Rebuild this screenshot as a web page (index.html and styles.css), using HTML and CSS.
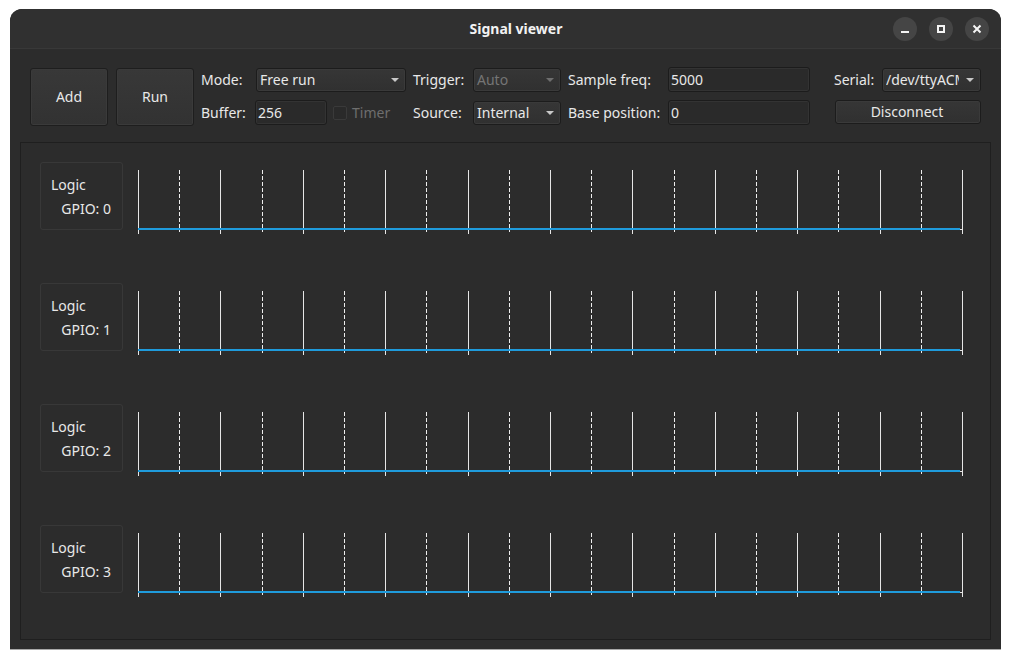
FILE: index.html

```html
<!DOCTYPE html>
<html lang="en">
<head>
  <meta charset="UTF-8" />
  <title>Signal viewer</title>
  <meta name="viewport" content="width=device-width, initial-scale=1.0" />
  <link rel="stylesheet" href="styles.css">
</head>
<body>
  <svg class="defs" width="0" height="0">
    <symbol id="scale" viewBox="0 0 830 66">
      <!-- solid ticks every 82.4px, dashed ones halfway -->
      <path class="solid" d="M.5 0V64M82.5 0V64M165.5 0V64M247.5 0V64M330.5 0V64M412.5 0V64M494.5 0V64M577.5 0V64M659.5 0V64M742.5 0V64M824.5 0V64" />
      <path class="dashed" d="M41.5 0V62M124.5 0V62M206.5 0V62M288.5 0V62M371.5 0V62M453.5 0V62M536.5 0V62M618.5 0V62M700.5 0V62M783.5 0V62" />
      <path class="base" d="M0 59.5H825" />
      <path class="signal" d="M0 59H822" />
    </symbol>
  </svg>

  <div class="window">
    <header class="titlebar">
      <h1>Signal viewer</h1>
      <div class="winbtns">
        <button class="winbtn"><svg width="10" height="10" viewBox="0 0 10 10"><path d="M1 8H9" /></svg></button>
        <button class="winbtn"><svg width="10" height="10" viewBox="0 0 10 10"><rect x="2" y="2" width="6" height="6" /></svg></button>
        <button class="winbtn"><svg width="10" height="10" viewBox="0 0 10 10"><path d="M1.5 1.5L8.5 8.5M8.5 1.5L1.5 8.5" /></svg></button>
      </div>
    </header>

    <div class="toolbar">
      <button class="bigbtn">Add</button>
      <button class="bigbtn">Run</button>
      <div class="controls">
        <label>Mode:</label>
        <div class="combo mode"><span>Free run</span><i class="arrow"></i></div>
        <label>Trigger:</label>
        <div class="combo mid off"><span>Auto</span><i class="arrow"></i></div>
        <label>Sample freq:</label>
        <input class="field wide" value="5000" />
        <label>Serial:</label>
        <div class="combo"><span class="clip">/dev/ttyACM0</span><i class="arrow"></i></div>

        <label>Buffer:</label>
        <div class="bufrow">
          <input class="field buf" value="256" />
          <span class="check"></span>
          <span class="timer">Timer</span>
        </div>
        <label>Source:</label>
        <div class="combo mid"><span>Internal</span><i class="arrow"></i></div>
        <label>Base position:</label>
        <input class="field wide" value="0" />
        <button class="disconnect">Disconnect</button>
      </div>
    </div>

    <main class="panel">
      <div class="row">
        <div class="tag"><div>Logic</div><div class="gpio">GPIO: 0</div></div>
        <svg class="plot" width="830" height="66"><use href="#scale" /></svg>
      </div>
      <div class="row">
        <div class="tag"><div>Logic</div><div class="gpio">GPIO: 1</div></div>
        <svg class="plot" width="830" height="66"><use href="#scale" /></svg>
      </div>
      <div class="row">
        <div class="tag"><div>Logic</div><div class="gpio">GPIO: 2</div></div>
        <svg class="plot" width="830" height="66"><use href="#scale" /></svg>
      </div>
      <div class="row">
        <div class="tag"><div>Logic</div><div class="gpio">GPIO: 3</div></div>
        <svg class="plot" width="830" height="66"><use href="#scale" /></svg>
      </div>
    </main>
  </div>
</body>
</html>
```

FILE: styles.css

```css
* { box-sizing: border-box; }
body { margin: 0; background: #fff; font-family: "Noto Sans", sans-serif; font-size: 14px; color: #e8e8e8; }
.defs { position: absolute; }

.window { width: 991px; height: 641px; margin: 9px 0 0 10px; background: #2c2c2c; border-radius: 12px 12px 0 0; border-bottom: 1px solid #a8a8a8; display: flex; flex-direction: column; }

.titlebar { height: 40px; flex: none; background: #303030; border-radius: 12px 12px 0 0; border-bottom: 1px solid #383838; position: relative; display: flex; justify-content: flex-end; align-items: center; padding-right: 12px; }
.titlebar h1 { position: absolute; left: 21px; right: 0; top: 10px; margin: 0; text-align: center; font-size: 14px; font-weight: 700; color: #f2f2f2; }
.winbtns { display: flex; gap: 12px; position: relative; }
.winbtn { width: 24px; height: 24px; padding: 0; border: none; border-radius: 50%; background: #454545; display: flex; align-items: center; justify-content: center; }
.winbtn svg { fill: none; stroke: #f5f5f5; stroke-width: 2; }

.toolbar { display: flex; gap: 8px; padding: 19px 20px 0; height: 93px; flex: none; }
.bigbtn { width: 78px; height: 58px; padding: 0 0 2px; background: linear-gradient(#383838, #323232); border: 1px solid #1e1e1e; border-radius: 3px; color: #e8e8e8; font: inherit; box-shadow: 0 0 0 1px #3a3a3a inset; }

.controls { display: grid; grid-template-columns: 54px 158px 60px 95px 100px 166px 48px 99px; grid-template-rows: 25px 25px; row-gap: 8px; margin: -1px 0 0 -1px; height: 58px; align-items: center; }
.controls > label { white-space: nowrap; }

.combo { height: 24px; align-self: end; background: linear-gradient(#363636, #303030); border: 1px solid #1c1c1c; border-radius: 3px; display: flex; align-items: center; justify-content: space-between; padding: 0 6px 2px 3px; box-shadow: 0 0 0 1px #3a3a3a inset; overflow: hidden; }
.combo.mode { margin: 0 7px 0 1px; }
.combo.mid { margin-right: 7px; }
.combo.off { color: #757575; }
.clip { width: 73px; overflow: hidden; white-space: nowrap; }
.arrow { width: 0; height: 0; flex: none; margin-top: 2px; border-left: 4px solid transparent; border-right: 4px solid transparent; border-top: 4px solid #c8c8c8; }
.combo.off .arrow { border-top-color: #6e6e6e; }

.field { width: 100%; height: 25px; background: #2a2a2a; border: 1px solid #1c1c1c; border-radius: 3px; color: #e8e8e8; font: inherit; padding: 0 2px; box-shadow: 0 0 0 1px #333 inset; outline: none; }
.field.wide { width: 142px; }
.bufrow { display: flex; align-items: center; }
.field.buf { width: 72px; }
.check { width: 14px; height: 14px; margin-left: 6px; border: 1px solid #3a3a3a; border-radius: 2px; background: #2a2a2a; }
.timer { margin-left: 5px; color: #6e6e6e; }

.disconnect { grid-column: span 2; align-self: start; height: 24px; margin-left: 1px; background: linear-gradient(#363636, #303030); border: 1px solid #1c1c1c; border-radius: 3px; color: #e8e8e8; font: inherit; padding: 0 2px 2px 0; box-shadow: 0 0 0 1px #3a3a3a inset; }

.panel { margin: 0 10px 9px; flex: 1; border: 1px solid #1f1f1f; padding: 19px 0 0 19px; display: flex; flex-direction: column; gap: 53px; }
.row { display: flex; gap: 15px; height: 68px; }
.tag { width: 83px; height: 68px; border: 1px solid #383838; border-radius: 3px; padding: 10px 10px 0; line-height: 24px; }
.gpio { text-align: right; margin-right: 1px; }

.plot { margin-top: 8px; display: block; }
.solid { stroke: #e6e6e6; stroke-width: 1; fill: none; }
.dashed { stroke: #eee; stroke-width: 1; stroke-dasharray: 4 2; fill: none; }
.base { stroke: #e6e6e6; stroke-width: 1; }
.signal { stroke: #1f9bdc; stroke-width: 2; }
```
